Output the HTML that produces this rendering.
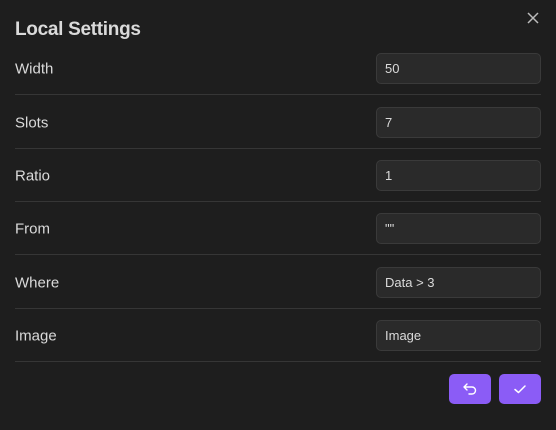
<!DOCTYPE html>
<html><head><style>
body{margin:0;width:556px;height:430px;background:#1e1e1e;font-family:"Liberation Sans",sans-serif;position:relative;overflow:hidden}
.t{position:absolute;left:15px;top:19px;font-size:19px;font-weight:bold;color:#dadada;letter-spacing:-0.3px}
.x{position:absolute;left:527px;top:12px}
.row{position:absolute;left:15px;width:526px;height:53px;border-bottom:1px solid #363636}
.row span{position:absolute;left:0;top:50%;transform:translateY(-45%);font-size:15px;color:#dadada}
.row div{position:absolute;left:361px;height:29px;top:12px;border:1px solid #3a3a3a;border-radius:5px;background:#2a2a2a;color:#dadada;font-size:13px;line-height:30px;padding-left:8px;box-sizing:content-box;width:155px}
.b{position:absolute;top:374px;width:42px;height:30px;background:#8b5cf6;border-radius:5px;display:flex;align-items:center;justify-content:center}
</style></head><body>
<div class="t">Local Settings</div>
<svg class="x" width="12" height="12" viewBox="0 0 12 12"><path d="M1 1L11 11M11 1L1 11" stroke="#bbb" stroke-width="1.5"/></svg>
<div class="row" style="top:41px"><span>Width</span><div>50</div></div>
<div class="row" style="top:95px"><span>Slots</span><div>7</div></div>
<div class="row" style="top:148px"><span>Ratio</span><div>1</div></div>
<div class="row" style="top:201px"><span>From</span><div>""</div></div>
<div class="row" style="top:255px"><span>Where</span><div>Data &gt; 3</div></div>
<div class="row" style="top:308px"><span>Image</span><div>Image</div></div>
<div class="b" style="left:449px"><svg width="16" height="16" viewBox="0 0 16 16" fill="none" stroke="#fff" stroke-width="1.4" stroke-linecap="round" stroke-linejoin="round"><path d="M5 3L2 6L5 9M2 6H10A3.5 3.5 0 0 1 10 13H7"/></svg></div>
<div class="b" style="left:499px"><svg width="16" height="16" viewBox="0 0 16 16" fill="none" stroke="#fff" stroke-width="1.5" stroke-linecap="round" stroke-linejoin="round"><path d="M3 8.5L6.5 11.5L13 5"/></svg></div>
</body></html>
